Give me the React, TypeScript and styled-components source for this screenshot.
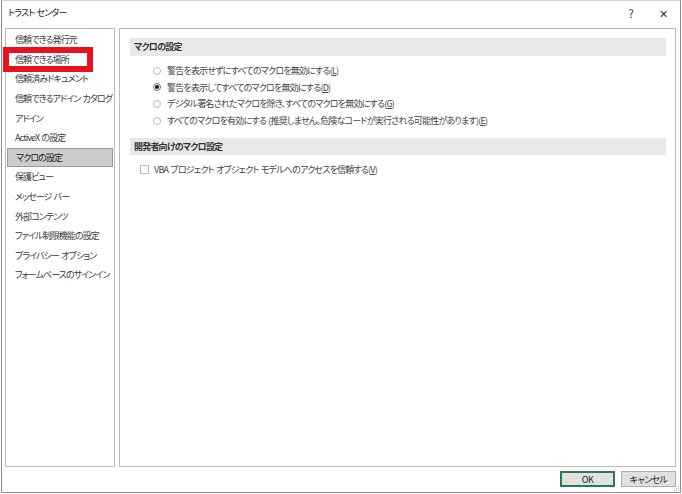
import React from "react";
import styled, { createGlobalStyle } from "styled-components";

const GlobalStyle = createGlobalStyle`
  html, body {
    margin: 0;
    padding: 0;
    background: #ffffff;
  }
  body {
    font-family: "Noto Sans CJK JP", "Noto Sans", sans-serif;
    font-feature-settings: "palt";
    letter-spacing: -0.8px;
    word-spacing: 1px;
    color: #333333;
  }
`;

const Window = styled.div`
  box-sizing: border-box;
  margin-left: 1px;
  width: 680px;
  height: 493px;
  border: 1px solid #8c8c8c;
  border-top-color: #d4d4d4;
  background: #ffffff;
  display: flex;
  flex-direction: column;
`;

const TitleBar = styled.div`
  height: 27px;
  display: flex;
  align-items: center;
  padding: 0 0 0 6px;
  font-size: 9px;
  color: #222;
`;

const TitleText = styled.div`
  flex: 1;
  margin-top: -4px;
`;

const TitleButton = styled.div<{ $w: number }>`
  width: ${(p) => p.$w}px;
  text-align: center;
  margin-top: -4px;
  font-size: 11px;
  letter-spacing: 0;
  color: #333;
`;

const Body = styled.div`
  flex: 1;
  display: flex;
  gap: 4px;
  padding: 0 4px 0 3px;
`;

const Panel = styled.div`
  box-sizing: border-box;
  height: 439px;
  border: 1px solid #bdbdbd;
  background: #ffffff;
`;

const NavPanel = styled(Panel)`
  width: 110px;
  padding-top: 1px;
`;

const ContentPanel = styled(Panel)`
  flex: 1;
  padding: 9px 9px 0 10px;
`;

const NavItem = styled.div<{ $selected?: boolean }>`
  position: relative;
  box-sizing: border-box;
  height: 19.6px;
  display: flex;
  align-items: center;
  padding-left: 9px;
  font-size: 9px;
  letter-spacing: -0.9px;
  white-space: pre;
  color: #3a3a3a;
  ${(p) =>
    p.$selected &&
    `
    margin: 0 1px;
    padding-left: 8px;
    background: #cccccc;
    border: 1px solid #9a9a9a;
    color: #222;
  `}
`;

const RedMark = styled.span`
  position: absolute;
  left: -3px;
  top: -3px;
  width: 90px;
  height: 25px;
  box-sizing: border-box;
  border: 6px solid #e8121d;
  pointer-events: none;
`;

const SectionHeader = styled.div`
  height: 17.5px;
  display: flex;
  align-items: center;
  padding-left: 4px;
  background: #e8e8e8;
  font-size: 9px;
  font-weight: 600;
  color: #333;
`;

const OptionList = styled.div`
  padding: 7px 0 9px 23px;
  display: flex;
  flex-direction: column;
`;

const OptionRow = styled.div`
  height: 16.6px;
  display: flex;
  align-items: center;
  gap: 6px;
  font-size: 9px;
  white-space: pre;
  color: #444;
`;

const Radio = styled.span<{ $checked?: boolean }>`
  box-sizing: border-box;
  width: 8px;
  height: 8px;
  border-radius: 50%;
  border: 1px solid ${(p) => (p.$checked ? "#6a6a6a" : "#b8b8b8")};
  display: flex;
  align-items: center;
  justify-content: center;
  &::after {
    content: "";
    width: 4px;
    height: 4px;
    border-radius: 50%;
    background: ${(p) => (p.$checked ? "#111" : "transparent")};
  }
`;

const CheckList = styled.div`
  padding: 6px 0 0 10px;
`;

const CheckRow = styled(OptionRow)`
  gap: 5px;
`;

const Checkbox = styled.span`
  box-sizing: border-box;
  width: 9px;
  height: 9px;
  border: 1px solid #b8b8b8;
  background: #fff;
`;

const Key = styled.span`
  text-decoration: underline;
`;

const Footer = styled.div`
  height: 25px;
  display: flex;
  justify-content: flex-end;
  align-items: flex-start;
  gap: 6px;
  padding: 4px 4px 0 0;
  box-sizing: border-box;
  position: relative;
`;

const Button = styled.button<{ $primary?: boolean }>`
  box-sizing: border-box;
  width: 55px;
  height: 16px;
  padding: 0;
  margin: 0;
  font-family: "Noto Sans CJK JP", "Noto Sans", sans-serif;
  font-feature-settings: "palt";
  letter-spacing: -0.6px;
  font-size: 9px;
  color: #222;
  background: #e1e1e1;
  border: ${(p) => (p.$primary ? "2px solid #2b7a4b" : "1px solid #adadad")};
  display: flex;
  align-items: center;
  justify-content: center;
`;

const Grip = styled.svg`
  position: absolute;
  right: 0;
  bottom: 0;
`;

const navItems = [
  "信頼できる発行元",
  "信頼できる場所",
  "信頼済みドキュメント",
  "信頼できるアドイン カタログ",
  "アドイン",
  "ActiveX の設定",
  "マクロの設定",
  "保護ビュー",
  "メッセージ バー",
  "外部コンテンツ",
  "ファイル制限機能の設定",
  "プライバシー オプション",
  "フォームベースのサインイン",
];

const macroOptions = [
  { label: "警告を表示せずにすべてのマクロを無効にする", key: "L", checked: false },
  { label: "警告を表示してすべてのマクロを無効にする", key: "D", checked: true },
  { label: "デジタル署名されたマクロを除き、すべてのマクロを無効にする", key: "G", checked: false },
  {
    label: "すべてのマクロを有効にする (推奨しません。危険なコードが実行される可能性があります)",
    key: "E",
    checked: false,
  },
];

const App = () => {
  return (
    <>
      <GlobalStyle />
      <Window>
        <TitleBar>
          <TitleText>トラスト センター</TitleText>
          <TitleButton $w={30}>?</TitleButton>
          <TitleButton $w={34}>✕</TitleButton>
        </TitleBar>
        <Body>
          <NavPanel>
            {navItems.map((item, i) => (
              <NavItem key={item} $selected={i === 6}>
                {item}
                {i === 1 && <RedMark />}
              </NavItem>
            ))}
          </NavPanel>
          <ContentPanel>
            <SectionHeader>マクロの設定</SectionHeader>
            <OptionList>
              {macroOptions.map((o) => (
                <OptionRow key={o.key}>
                  <Radio $checked={o.checked} />
                  <span>
                    {o.label}(<Key>{o.key}</Key>)
                  </span>
                </OptionRow>
              ))}
            </OptionList>
            <SectionHeader>開発者向けのマクロ設定</SectionHeader>
            <CheckList>
              <CheckRow>
                <Checkbox />
                <span>
                  VBA プロジェクト オブジェクト モデルへのアクセスを信頼する(<Key>V</Key>)
                </span>
              </CheckRow>
            </CheckList>
          </ContentPanel>
        </Body>
        <Footer>
          <Button $primary>OK</Button>
          <Button>キャンセル</Button>
          <Grip width="6" height="6" viewBox="0 0 6 6">
            <rect x="4" y="0" width="1" height="1" fill="#b0b0b0" />
            <rect x="2" y="2" width="1" height="1" fill="#b0b0b0" />
            <rect x="4" y="2" width="1" height="1" fill="#b0b0b0" />
            <rect x="0" y="4" width="1" height="1" fill="#b0b0b0" />
            <rect x="2" y="4" width="1" height="1" fill="#b0b0b0" />
            <rect x="4" y="4" width="1" height="1" fill="#b0b0b0" />
          </Grip>
        </Footer>
      </Window>
    </>
  );
};

export default App;
